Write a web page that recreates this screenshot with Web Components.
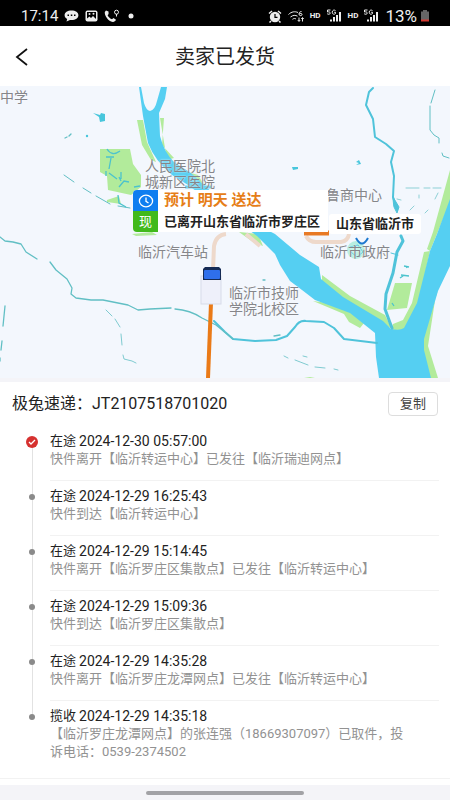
<!DOCTYPE html>
<html lang="zh-CN">
<head>
<meta charset="UTF-8">
<meta name="viewport" content="width=device-width, initial-scale=1.0">
<title>卖家已发货</title>
<style>
  body {
    margin: 0;
    background: #fff;
    color: #222;
    font-family: Roboto, "Noto Sans CJK SC", sans-serif;
  }
</style>
</head>
<body>
<logistics-page>
  <status-bar slot="top" time="17:14" battery="13%"></status-bar>
  <title-bar slot="top">卖家已发货</title-bar>

  <route-map>
    <map-label x="0" y="89">中学</map-label>
    <map-label x="145" y="158">人民医院北<br>城新区医院</map-label>
    <map-label x="138" y="244">临沂汽车站</map-label>
    <map-label x="326" y="187">鲁商中心</map-label>
    <map-label x="320" y="244">临沂市政府</map-label>
    <map-label x="229" y="285">临沂市技师<br>学院北校区</map-label>
    <map-place x="329" y="214">山东省临沂市</map-place>
    <eta-card x="133" y="190">
      <span slot="eta">预计 明天 送达</span>
      <span slot="now">已离开山东省临沂市罗庄区</span>
    </eta-card>
  </route-map>

  <courier-row company="极兔速递：" number="JT2107518701020"></courier-row>

  <track-list>
    <track-item current status="在途" time="2024-12-30 05:57:00">快件离开【临沂转运中心】已发往【临沂瑞迪网点】</track-item>
    <track-item status="在途" time="2024-12-29 16:25:43">快件到达【临沂转运中心】</track-item>
    <track-item status="在途" time="2024-12-29 15:14:45">快件离开【临沂罗庄区集散点】已发往【临沂转运中心】</track-item>
    <track-item status="在途" time="2024-12-29 15:09:36">快件到达【临沂罗庄区集散点】</track-item>
    <track-item status="在途" time="2024-12-29 14:35:28">快件离开【临沂罗庄龙潭网点】已发往【临沂转运中心】</track-item>
    <track-item last status="揽收" time="2024-12-29 14:35:18">【临沂罗庄龙潭网点】的张连强（18669307097）已取件，投诉电话：0539-2374502</track-item>
  </track-list>

  <home-indicator slot="bottom"></home-indicator>
</logistics-page>

<script>
class BaseElement extends HTMLElement {
  constructor() {
    super();
    this.attachShadow({ mode: 'open' });
  }

  connectedCallback() {
    this.shadowRoot.innerHTML = this.render();
  }

  attr(name) {
    return this.getAttribute(name) || '';
  }
}

class LogisticsPage extends BaseElement {
  render() {
    return `
      <style>
        :host {
          display: flex;
          flex-direction: column;
          min-height: 100vh;
        }

        main {
          flex: 1;
        }
      </style>
      <slot name="top"></slot>
      <main><slot></slot></main>
      <slot name="bottom"></slot>
    `;
  }
}

class StatusBar extends BaseElement {
  signal() {
    return `
      <svg width="17" height="14" viewBox="0 0 17 14" fill="#eee">
        <path d="M4.500 1H1.500V3C3 2.600 4.300 3 4.200 4.200C4 5.500 2.400 5.500 1.200 4.800M9.500 1.600C8 .4 6.200 1.400 6.200 3.200C6.200 5.400 8.500 5.800 9.500 4.500V3.300H8.200" fill="none" stroke="#eee"/>
        <rect x="4" y="10.500" width="2" height="2"/>
        <rect x="7" y="8" width="2" height="4.500"/>
        <rect x="10" y="6" width="2" height="6.500"/>
        <rect x="13" y="3" width="2" height="9.500"/>
      </svg>
    `;
  }

  render() {
    return `
      <style>
        :host {
          display: flex;
          align-items: center;
          justify-content: space-between;
          box-sizing: border-box;
          height: 26px;
          padding: 6px 20px 0 21px;
          background: #000;
          color: #eee;
          font-size: 15px;
          line-height: 20px;
        }

        div {
          display: flex;
          align-items: center;
        }

        .left {
          gap: 6px;
        }

        .right {
          gap: 5px;
        }

        .hd {
          font-size: 8px;
          font-weight: bold;
        }

        .power {
          display: flex;
          align-items: center;
          gap: 3px;
          font-size: 17px;
        }

        svg {
          display: block;
        }
      </style>
      <div class="left">
        <span>${this.attr('time')}</span>
        <svg width="15" height="12" viewBox="0 0 15 12">
          <path d="M7.500 .5C3.500 .5 .6 2.500 .6 5.200C.6 6.800 1.700 8.200 3.200 9L2.500 11.500L6 9.900C11 10.400 14.400 8.200 14.400 5.200C14.400 2.500 11.500 .5 7.500 .5Z" fill="#eee"/>
          <path d="M3.500 5.200H5M6.800 5.200H8.300M10 5.200H11.500" stroke="#000" stroke-width="1.500"/>
        </svg>
        <svg width="13" height="12" viewBox="0 0 13 12">
          <rect x=".5" y=".5" width="12" height="11" rx="2" fill="#eee"/>
          <path d="M2 2H11V9L8 6L6 8L4.500 6.500L2 8.500Z" fill="#000"/>
          <circle cx="4.500" cy="4" r="1" fill="#eee"/>
          <circle cx="8.500" cy="3.800" r="1" fill="#eee"/>
        </svg>
        <svg width="16" height="14" viewBox="0 0 16 14">
          <path d="M2 1.500L4.500 2.500L4.600 5L3.600 6.200C4.700 8.400 6.200 9.500 8 10.200L9.500 9L12 10.800C11 13 9 13.500 6.500 12.200C3 10.500 .5 6 .8 3Z" fill="#eee"/>
          <circle cx="12.500" cy="3.200" r="2" fill="none" stroke="#eee"/>
          <path d="M12.500 5V7.500" stroke="#eee"/>
        </svg>
        <svg width="14" height="6" viewBox="0 0 14 6"><circle cx="5" cy="3" r="2.500" fill="#eee"/></svg>
      </div>
      <div class="right">
        <svg width="14" height="13" viewBox="0 0 14 13">
          <circle cx="7" cy="7" r="5.200" fill="#eee"/>
          <path d="M1 3.500L4 1M13 3.500L10 1M3 11L1.500 12.500M11 11L12.500 12.500" stroke="#eee" stroke-width="1.500"/>
          <path d="M7 4V7.300H9.500" fill="none" stroke="#000" stroke-width="1.200"/>
        </svg>
        <svg width="18" height="13" viewBox="0 0 18 13" fill="none" stroke="#eee">
          <path d="M1.500 4.500C4.500 1.500 8 1.200 11 2.500M3.500 7C6 5 8.500 5 10.500 6.200M5.500 9.300C7 8.200 8 8.300 9 9"/>
          <path d="M14.500 1.500C12.500 1.500 12 3 12 4.200C12.200 6.200 15 6 15 4.500C15 3.200 13 3 12.200 4"/>
          <path d="M12 7.500V11M10.800 10L12 11.500L13.200 10M15.500 11.500V8M14.300 9L15.500 7.500L16.700 9"/>
        </svg>
        <span class="hd">HD</span>
        ${this.signal()}
        <span class="hd">HD</span>
        ${this.signal()}
        <span class="power">${this.attr('battery')}
          <svg width="10" height="12" viewBox="0 0 10 12">
            <path d="M3 0H7V1.500H9V10H1V1.500H3Z" fill="#666"/>
            <rect x="1" y="9.500" width="8" height="2" fill="#d33a32"/>
          </svg>
        </span>
      </div>
    `;
  }
}

class TitleBar extends BaseElement {
  render() {
    return `
      <style>
        :host {
          display: grid;
          grid-template-columns: 48px 1fr 48px;
          align-items: center;
          box-sizing: border-box;
          height: 60px;
          padding-top: 2px;
          background: #fff;
        }

        button {
          display: flex;
          padding: 8px 14px;
          border: none;
          background: none;
        }

        h1 {
          margin: 0;
          text-align: center;
          font-size: 20px;
          font-weight: 400;
          line-height: 28px;
        }
      </style>
      <button type="button" aria-label="返回">
        <svg width="16" height="20" viewBox="0 0 16 20">
          <path d="M13 2L3 10L13 18" fill="none" stroke="#111" stroke-width="1.800"/>
        </svg>
      </button>
      <h1><slot></slot></h1>
    `;
  }
}

// The drawing and the pins share one coordinate system: x 0-450, y 86-382.
const MAP = { top: 86, width: 450, height: 296 };

class MapPin extends BaseElement {
  connectedCallback() {
    super.connectedCallback();
    this.style.left = (this.attr('x') / MAP.width) * 100 + '%';
    this.style.top = ((this.attr('y') - MAP.top) / MAP.height) * 100 + '%';
  }
}

class MapLabel extends MapPin {
  render() {
    return `
      <style>
        :host {
          display: block;
          position: absolute;
          color: #85868a;
          font-size: 14px;
          line-height: 16px;
          white-space: nowrap;
          text-shadow: 0 0 2px #fff;
        }
      </style>
      <slot></slot>
    `;
  }
}

class MapPlace extends MapPin {
  render() {
    return `
      <style>
        :host {
          display: block;
          position: absolute;
          padding: 0 7px;
          border-radius: 3px;
          background: #fff;
          color: #222;
          font-size: 13px;
          font-weight: bold;
          line-height: 20px;
          white-space: nowrap;
        }
      </style>
      <slot></slot>
    `;
  }
}

class EtaCard extends MapPin {
  render() {
    return `
      <style>
        :host {
          display: grid;
          grid-template-columns: 25px auto;
          grid-auto-rows: 21px;
          position: absolute;
          overflow: hidden;
          border-radius: 4px 0 0 4px;
          background: #fff;
          font-size: 13px;
          font-weight: bold;
          line-height: 21px;
          white-space: nowrap;
        }

        .icon {
          display: flex;
          align-items: center;
          justify-content: center;
          background: #0f7ef0;
          color: #fff;
          font-weight: 400;
        }

        .now {
          background: #41b91b;
        }

        .text {
          padding: 0 8px 0 6px;
        }

        .eta {
          color: #e67e17;
          font-size: 15px;
        }
      </style>
      <span class="icon">
        <svg width="16" height="14" viewBox="0 0 16 14" fill="none" stroke="#fff" stroke-width="1.300">
          <ellipse cx="8" cy="7" rx="6.600" ry="5.800"/>
          <path d="M8 3.500V7.300L10.500 9"/>
        </svg>
      </span>
      <span class="text eta"><slot name="eta"></slot></span>
      <span class="icon now">现</span>
      <span class="text"><slot name="now"></slot></span>
    `;
  }
}

class RouteMap extends BaseElement {
  render() {
    return `
      <style>
        :host {
          display: block;
          position: relative;
          overflow: hidden;
          background: #f3f7fd;
        }

        svg {
          display: block;
          width: 100%;
          height: auto;
        }
      </style>
      <svg viewBox="0 ${MAP.top} ${MAP.width} ${MAP.height}" role="img" aria-label="物流地图" fill="none">
        <!-- parks and river banks -->
        <g fill="#b2eb9b">
          <path d="M100 149L130 149L133 164L141 175L141 187L131 195L108 190L107 176L100 172Z"/>
          <path d="M107 200L119 196L121 204L107 202Z"/>
          <path d="M137 120L143 120L147 142L156 162L151 160L142 145Z"/>
          <path d="M160 118L164 118L162 145L174 158L167 160Z"/>
          <path d="M184 171L198 175L206 188L196 184Z"/>
          <path d="M239 232L258 234L263 246L253 242Z"/>
          <path d="M132 234L152 232L157 235L136 236Z"/>
          <path d="M322 275L350 296L385 315L392 329L355 309L322 282Z"/>
          <path d="M313 301L336 304L350 311L364 323L360 328L349 322L344 314Z"/>
          <path d="M395 283L412 283L407 308L387 310Z"/>
          <path d="M424 252L430 251L418 306L405 330H391L393 324L403 320L412 303Z"/>
          <path d="M450 170V202L430 251L427 249L433 232Z"/>
          <path d="M450 266L436 294L428 346L438 378H429L421 345L438 290Z"/>
          <path d="M304 378L310 377L315 378Z"/>
        </g>

        <!-- rivers -->
        <g fill="#55cff2">
          <path d="M139 87H141L144 103Q146 110 150 111Q155 110 157 101L161 87H167L165 99L159 113L160 136Q164 152 174 162L191 173L206 187L240 216L275 234L300 255L319 267L321 279L343 297L383 321L391 329Q400 331 404 328L417 303L430 251L437 234L450 199V266L438 291L424 339V350L431 378H379L376 357L375 333L350 313L315 300L302 290L290 281L280 265L275 254L257 236L220 209L188 185L172 175Q155 161 148 143L143 116Z"/>
        </g>
        <path d="M185 187H211" stroke="#55cff2" stroke-width="3"/>

        <!-- streams -->
        <g stroke="#4fc3da" stroke-linecap="round" stroke-linejoin="round">
          <path d="M373 88L369 92L366 105L373 119L375 137L386 144L394 151L391 162L394 176L393 197L397 210" stroke-width="2"/>
          <path d="M393 197L399 207L397 213L394 207Z" fill="#4fc3da"/>
          <path d="M401 236L403 241L397 252L393 273L386 294L385 309L389 320L392 328" stroke-width="3"/>
          <path d="M391 253L398 255"/>
          <path d="M214 321L225 332L233 339L255 341L276 340L287 336L295 327Q299 320 306 321L324 322L334 328L344 339L377 343" stroke-width="2"/>
        </g>
        <g stroke="#61bfc4" stroke-width="1.300" stroke-linecap="round" stroke-linejoin="round">
          <path d="M0 237L5 241L13 242L21 244L26 252L37 259"/>
          <path d="M50 262L56 270L67 279L72 288L71 294L76 298L91 300L103 300L128 305L138 310L150 309L171 308"/>
          <path d="M175 309Q190 310 202 318L216 325Q226 333 233 339"/>
          <path d="M5 306L3 326M2 341L1 350M0 358V361"/>
          <path d="M106 310L112 316M115 319L120 327M121 334L122 345M123 355L124 359L132 361L136 363" stroke-width=".8"/>
          <path d="M64 175L74 182M83 188L91 193M96 196L110 204M118 206L130 208" stroke-width="1"/>
          <path d="M435 90L431 103M430 106V130L434 135L439 138L439 143M442 153L443 156L449 158" stroke-width="1"/>
          <path d="M406 188H419M424 188H430M433 188H441M397 199L401 200M410 210L414 206M419 198V195M425 213L428 210M435 199L438 193" stroke-width=".7"/>
          <path d="M284 356L288 358M295 360L308 365M315 367L325 368M334 369L338 370M303 356L307 357" stroke-width=".8"/>
          <path d="M65 138L67 137M69 136L71 134M274 336L280 335M263 280H265"/>
        </g>
        <g stroke="#4cc3cd" stroke-width="1.300">
          <path d="M107 149Q112 157 120 151M106 157H114M111 158L109 169M106 171V176M109 173L117 179M121 172V179M119 187L124 181L129 182M121 181L119 177M134 187L140 186"/>
          <path d="M118 195L119 203L126 207M400 278L403 276M404 266L409 267M406 266L407 268M401 275L409 276M392 303L394 306"/>
        </g>
        <g fill="#47c6dc">
          <path d="M93 113L100 115L101 113L105 114L105 121L100 122L99 117Z"/>
          <circle cx="87" cy="136" r="1.200"/>
          <path d="M292 167L298 167L298 169L293 170Z"/>
          <path d="M356 162L359 160L361 164L356 165L359 163Z"/>
        </g>

        <!-- travelled and planned route -->
        <path d="M213 270L214 246Q216 235 226 234" stroke="#eed9cb" stroke-width="4"/>
        <path d="M246 234L260 246" stroke="#eed9cb" stroke-width="4"/>
        <path d="M306 236Q309 242 316 242H341Q348 241 349 234" stroke="#eed9cb" stroke-width="4"/>
        <path d="M211 303L208 378" stroke="#ea7a17" stroke-width="4"/>
        <path d="M304 233H329" stroke="#e87a25" stroke-width="5"/>

        <!-- destination -->
        <circle cx="356" cy="250" r="9" fill="#b7eee1"/>
        <path d="M350 247L358 245L363 252L357 257L351 252" stroke="#55c9df"/>
        <path d="M356 238Q362 249 368 238" stroke="#1c78cf" stroke-width="2"/>

        <!-- truck -->
        <rect x="201" y="276" width="20" height="28" fill="#eef0fa" stroke="#d7dce9"/>
        <path d="M205 267H219L221 269V280H203V269Z" fill="#152b55"/>
        <rect x="204" y="270" width="16" height="9" rx="1" fill="#2f6feb"/>

        <rect y="378" width="450" height="4" fill="#f4f4f8"/>
      </svg>
      <slot></slot>
    `;
  }
}

class CourierRow extends BaseElement {
  connectedCallback() {
    super.connectedCallback();
    this.shadowRoot.querySelector('button').addEventListener('click', () => {
      navigator.clipboard?.writeText(this.attr('number'));
    });
  }

  render() {
    return `
      <style>
        :host {
          display: flex;
          align-items: center;
          justify-content: space-between;
          height: 44px;
          padding: 0 12px;
          font-size: 16px;
          line-height: 24px;
        }

        button {
          box-sizing: border-box;
          width: 50px;
          height: 24px;
          padding: 0;
          border: 1px solid #ddd;
          border-radius: 4px;
          background: #fff;
          color: #444;
          font: inherit;
          font-size: 13px;
          line-height: 20px;
        }
      </style>
      <span>${this.attr('company')}${this.attr('number')}</span>
      <button type="button">复制</button>
    `;
  }
}

class TrackList extends BaseElement {
  connectedCallback() {
    super.connectedCallback();
    this.setAttribute('role', 'list');
  }

  render() {
    return `
      <style>
        :host {
          display: block;
          padding: 0 11px 0 22px;
        }
      </style>
      <slot></slot>
    `;
  }
}

class TrackItem extends BaseElement {
  connectedCallback() {
    super.connectedCallback();
    this.setAttribute('role', 'listitem');
  }

  mark() {
    if (this.hasAttribute('current')) {
      return `
        <circle cx="10" cy="9" r="6" fill="#d6312f"/>
        <path d="M7 9L9 11L13 7" fill="none" stroke="#fff" stroke-width="1.300"/>
      `;
    }
    return '<circle cx="10" cy="9" r="3" fill="#8a8a8a"/>';
  }

  render() {
    return `
      <style>
        :host {
          display: grid;
          grid-template-columns: 20px 1fr;
          column-gap: 8px;
        }

        .rail {
          display: grid;
          grid-template-rows: 7px 18px 1fr;
          justify-items: center;
          background: linear-gradient(#e2e2e2, #e2e2e2) center / 1px 100% no-repeat;
        }

        :host([current]) .rail {
          background-position: center bottom;
          background-size: 1px 39px;
        }

        :host([last]) .rail {
          background-position: center top;
          background-size: 1px 16px;
        }

        svg {
          display: block;
          grid-row: 2;
        }

        .body {
          padding: 6px 0 12px;
          border-bottom: 1px solid #f2f2f2;
          font-size: 13px;
          line-height: 18px;
        }

        :host([last]) .body {
          padding-right: 28px;
          border-bottom: none;
        }

        .head {
          display: flex;
          align-items: center;
          gap: 3px;
        }

        time {
          font-size: 14px;
        }

        p {
          margin: 0;
          color: #929292;
        }
      </style>
      <div class="rail">
        <svg width="20" height="18" viewBox="0 0 20 18">${this.mark()}</svg>
      </div>
      <div class="body">
        <div class="head"><span>${this.attr('status')}</span><time>${this.attr('time')}</time></div>
        <p><slot></slot></p>
      </div>
    `;
  }
}

class HomeIndicator extends BaseElement {
  render() {
    return `
      <style>
        :host {
          display: block;
          padding-top: 6px;
          border-top: 1px solid #f2f2f2;
        }

        div {
          display: flex;
          align-items: center;
          justify-content: center;
          height: 15px;
          background: #f4f4f8;
        }

        span {
          width: 35%;
          height: 4px;
          border-radius: 2px;
          background: #a2a2a6;
        }
      </style>
      <div><span></span></div>
    `;
  }
}

customElements.define('logistics-page', LogisticsPage);
customElements.define('status-bar', StatusBar);
customElements.define('title-bar', TitleBar);
customElements.define('map-label', MapLabel);
customElements.define('map-place', MapPlace);
customElements.define('eta-card', EtaCard);
customElements.define('route-map', RouteMap);
customElements.define('courier-row', CourierRow);
customElements.define('track-list', TrackList);
customElements.define('track-item', TrackItem);
customElements.define('home-indicator', HomeIndicator);
</script>
</body>
</html>
